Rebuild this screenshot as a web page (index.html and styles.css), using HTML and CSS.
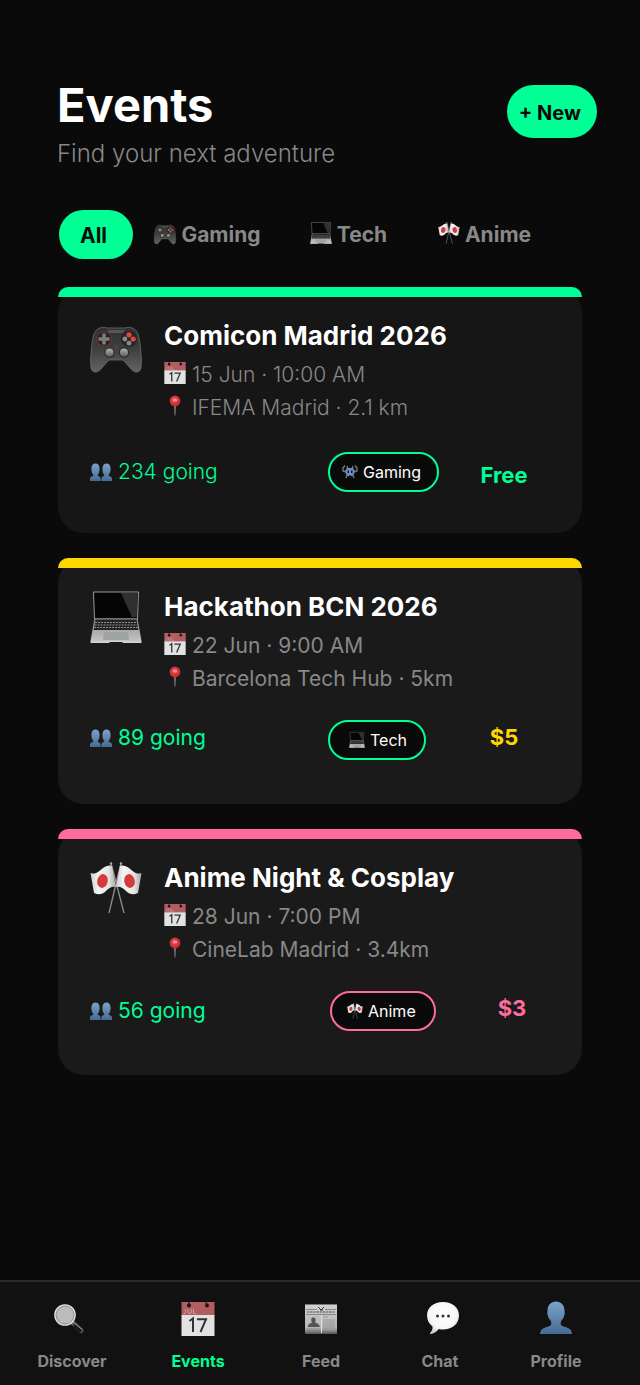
FILE: index.html
```html
<!DOCTYPE html>
<html lang="en">
<head>
<meta charset="utf-8">
<meta name="viewport" content="width=device-width, initial-scale=1">
<title>Events</title>
<link rel="stylesheet" href="styles.css">
</head>
<body>
<svg class="sprite" width="0" height="0" aria-hidden="true">
  <defs>
    <linearGradient id="pad" x1="0" y1="0" x2="0" y2="1"><stop offset="0" stop-color="#303131"/><stop offset=".45" stop-color="#3c3d3d"/><stop offset="1" stop-color="#626363"/></linearGradient>
    <linearGradient id="stick" x1="0" y1="0" x2="0" y2="1"><stop offset="0" stop-color="#b0b0b0"/><stop offset="1" stop-color="#606060"/></linearGradient>
    <linearGradient id="blue" x1="0" y1="0" x2="0" y2="1"><stop offset="0" stop-color="#7ba3c9"/><stop offset="1" stop-color="#456a93"/></linearGradient>
    <linearGradient id="cloth" x1="0" y1="0" x2="1" y2="0"><stop offset="0" stop-color="#cfcfcf"/><stop offset=".3" stop-color="#f4f4f4"/><stop offset=".7" stop-color="#e6e6e6"/><stop offset="1" stop-color="#a9a9a9"/></linearGradient>
    <linearGradient id="metal" x1="0" y1="0" x2="0" y2="1"><stop offset="0" stop-color="#8e8e8e"/><stop offset="1" stop-color="#c4c4c4"/></linearGradient>
    <linearGradient id="paper" x1="0" y1="0" x2="0" y2="1"><stop offset="0" stop-color="#d2d2d2"/><stop offset=".8" stop-color="#b4b4b4"/><stop offset="1" stop-color="#555"/></linearGradient>
    <radialGradient id="bubble" cx=".5" cy=".4" r=".6"><stop offset="0" stop-color="#fff"/><stop offset=".7" stop-color="#f7f7f7"/><stop offset="1" stop-color="#cfd1d1"/></radialGradient>
    <radialGradient id="ball" cx=".45" cy=".4" r=".6"><stop offset="0" stop-color="#ff6b78"/><stop offset=".4" stop-color="#dc3b40"/><stop offset="1" stop-color="#bd2b2e"/></radialGradient>
  </defs>
  <symbol id="i-gamepad" viewBox="0 -1 52 52">
    <path d="M8 8C11 6 14 6 17 7H35C38 6 41 6 44 8C48 10 49 16 50 23C51 31 52 40 51 47C50 52 45 52 42 49L34 40C33 39 32 39 31 39H21C20 39 19 39 18 40L10 49C7 52 2 52 1 47C0 40 1 31 2 23C3 16 4 10 8 8Z" fill="url(#pad)" stroke="#6c6c6c" stroke-width=".8"/>
    <path d="M17 9H35L33 12H19Z" fill="#565656"/>
    <circle cx="14" cy="18" r="7.2" fill="#232424" stroke="#7b3034" stroke-width=".9"/>
    <path d="M12.3 12.5h3.4v3.8h3.8v3.4h-3.8v3.8h-3.4v-3.8H8.500v-3.400h3.800z" fill="#7d7d7d"/>
    <circle cx="39" cy="18" r="8" fill="#242525"/>
    <circle cx="39" cy="13.800" r="2.600" fill="#e5453f"/><circle cx="43.200" cy="18" r="2.600" fill="#e5453f"/>
    <circle cx="34.900" cy="18" r="2.400" fill="#8b8b8b"/><circle cx="39" cy="22.200" r="2.400" fill="#8b8b8b"/>
    <circle cx="26.500" cy="26" r="1.500" fill="#8b3035"/>
    <circle cx="19.500" cy="31.500" r="5.200" fill="#2a2b2b"/><circle cx="34" cy="31.500" r="5.200" fill="#2a2b2b"/>
    <circle cx="19.500" cy="31.500" r="4" fill="url(#stick)"/><circle cx="34" cy="31.500" r="4" fill="url(#stick)"/>
  </symbol>
  <symbol id="i-laptop" viewBox="0 0 52 52">
    <path d="M3.500 1H48.500L47.500 28H4.500Z" fill="#050505" stroke="#9a9a9a" stroke-width="1"/>
    <path d="M31 2H47.600L46.800 26H42Z" fill="#303030"/>
    <path d="M4.500 27.500H47.500L51.500 50H.5Z" fill="url(#metal)"/>
    <path d="M5.500 28.500H46.500L48.500 39H3.500Z" fill="#242424"/>
    <path d="M5 31.500H47M4.500 34H47.500M4 36.500H48" stroke="#aaa" stroke-width=".8" stroke-dasharray="2 1"/>
    <path d="M14 41H38L39 49H13Z" fill="#9ea3a3"/>
    <path d="M.5 50H51.500V52H33L32 51H20L19 52H.5Z" fill="#d0d0d0"/>
  </symbol>
  <symbol id="i-flags" viewBox="0 0 52 52">
    <path d="M21 1L34 51M31 1L19 51" stroke="#8e8e8e" stroke-width="1.300"/>
    <path d="M.5 11C6 13 9 9 13 6C16 4 19 3 22 4L26 25C22 24 19 26 16 29C12 33 8 33 4 31Z" fill="url(#cloth)"/>
    <path d="M51.500 11C46 13 43 9 39 6C36 4 33 3 30 4L26 25C30 24 33 26 36 29C40 33 44 33 48 31Z" fill="url(#cloth)"/>
    <ellipse cx="12.500" cy="19" rx="5.300" ry="7" transform="rotate(12 12.500 19)" fill="#d53b3c"/>
    <ellipse cx="39.500" cy="19" rx="5.300" ry="7" transform="rotate(-12 39.500 19)" fill="#d53b3c"/>
    <circle cx="21" cy="1.500" r="1.200" fill="#aaa"/><circle cx="31" cy="1.500" r="1.200" fill="#aaa"/>
  </symbol>
  <symbol id="i-calendar" viewBox="0 0 33 34">
    <path d="M0 0H33V14H0Z" fill="#b25d61"/><path d="M0 13H33V34H0Z" fill="#e2e2e2"/>
    <circle cx="7.500" cy="3.500" r="2" fill="#171717"/><circle cx="25.500" cy="3.500" r="2" fill="#171717"/>
    <path d="M7 0L8 3M24 0L26 3" stroke="#171717" stroke-width="1.200"/>
    <path d="M4 7V10.500Q4 12 2 11.500M6.500 7V10Q6.500 11.700 8.200 11.700T9.800 10V7M12 7V11.600H14.500" fill="none" stroke="#d3a3a5" stroke-width=".9"/>
    <path d="M8 19L11.500 16.500V30M15.500 17.300H24.500L19 30" fill="none" stroke="#303234" stroke-width="2"/>
  </symbol>
  <symbol id="i-pin" viewBox="0 0 22 22">
    <path d="M10.200 10H11.800L11.400 20.500H10.600Z" fill="#8f8f8f"/>
    <circle cx="11" cy="6" r="5.400" fill="url(#ball)"/><ellipse cx="11" cy="5" rx="2.400" ry="1.500" fill="#f58c9a"/>
  </symbol>
  <symbol id="i-people" viewBox="0 0 22 18">
    <g fill="url(#blue)">
      <path d="M0 18V15.500C0 13.300 3.500 13.500 3.500 12C1.800 10.500 1.400 8 1.400 5.500C1.400 2.400 3.200.5 5.500.5S9.600 2.400 9.600 5.500C9.600 8 9.200 10.500 7.600 12C7.600 13.500 10.600 13.300 10.600 15.500V18Z"/>
      <path d="M11.400 18V15.500C11.400 13.300 14.400 13.500 14.400 12C12.800 10.500 12.400 8 12.400 5.500C12.400 2.400 14.200.5 16.500.5S20.600 2.400 20.600 5.500C20.600 8 20.200 10.500 18.500 12C18.500 13.500 22 13.300 22 15.500V18Z"/>
    </g>
  </symbol>
  <symbol id="i-invader" viewBox="0 0 16 16">
    <path d="M3 1.500L1 4V7L4 8M13 1.500L15 4V7L12 8M5 11L4 14M11 11L12 14M5 2L6 5M11 2L10 5" fill="none" stroke="#77767c" stroke-width="1.400"/>
    <path d="M5 4H11L13 7L12 10L10 12.500L8 11L6 12.500L4 10L3 7Z" fill="#6b91bf"/>
    <path d="M5.500 6.500H7V9H5.500ZM9 6.500H10.500V9H9Z" fill="#111"/>
  </symbol>
  <symbol id="i-search" viewBox="3 0 34 34">
    <path d="M20 20L29 28.500" stroke="#525858" stroke-width="5" stroke-linecap="round"/>
    <path d="M23 24L28 28.500" stroke="#161818" stroke-width="3.200" stroke-linecap="round"/>
    <path d="M21 20L30 27.500" stroke="#a2a6a6" stroke-width=".8"/>
    <circle cx="13" cy="13" r="10" fill="#bcbcbc" stroke="#e2e2e2" stroke-width="1.600"/>
    <circle cx="13" cy="13" r="9" fill="none" stroke="#777" stroke-width=".7"/>
  </symbol>
  <symbol id="i-news" viewBox="0 0 34 34">
    <path d="M1 2H33V32H1Z" fill="url(#paper)"/>
    <path d="M1 2.500H33" stroke="#777"/><path d="M2 7.500H13M21 7.500H32M2 12.500H32" stroke="#777" stroke-width=".8"/>
    <path d="M14 5L17 8L20 5M16 8H19" stroke="#333" fill="none"/>
    <path d="M3 10H31" stroke="#777" stroke-width="1.600" stroke-dasharray="2 .7 3 .7"/>
    <path d="M3 14H16V25H3Z" fill="#bdbdbd"/><path d="M4 25C4 21 7 22 8 20C6 17 8 15 10 15.500C12 16 12 19 11 20C13 22 15 21 16 25Z" fill="#555"/>
    <path d="M17.500 13V31" stroke="#ddd"/><path d="M19 15H24M19 18H31M19 20H31M19 22H31M19 24H31M19 26H31M3 27H16M3 29H16" stroke="#858585" stroke-width=".6"/>
  </symbol>
  <symbol id="i-chat" viewBox="-3 1 34 34">
    <path d="M17 1C26.500 1 33 6.500 33 14.500C33 23 26 28.500 17 28.500C15.500 28.500 14 28.400 12.800 28C10.500 30.800 7.500 33 4.500 33C4 33 3.800 32.500 4.200 32C5.800 30 6.800 28 6.500 25.500C3 23 1 19 1 14.500C1 6.500 7.500 1 17 1Z" fill="url(#bubble)"/>
    <circle cx="11.500" cy="15" r="1.500" fill="#333"/><circle cx="17" cy="15" r="1.500" fill="#333"/><circle cx="22.500" cy="15" r="1.500" fill="#333"/>
  </symbol>
  <symbol id="i-person" viewBox="0 1 34 34">
    <path d="M17 .5C22 .5 25.500 4 25.500 9.500C25.500 11 26 11.500 25.500 13.500C25 16 24 18 22.500 19.500C21.500 21 21.500 23 22 24C24 26.500 33 25.500 33 33H1C1 25.500 10 26.500 12 24C12.500 23 12.500 21 11.500 19.500C10 18 9 16 8.500 13.500C8 11.500 8.500 11 8.500 9.500C8.500 4 12 .5 17 .5Z" fill="url(#blue)"/>
  </symbol>
</svg>

<div class="app">
  <header class="header">
    <div>
      <h1 class="header__title">Events</h1>
      <p class="header__subtitle">Find your next adventure</p>
    </div>
    <button class="new-button" type="button">+ New</button>
  </header>

  <div class="tabs">
    <button class="tab tab--active" type="button">All</button>
    <button class="tab" type="button"><svg class="icon" aria-hidden="true"><use href="#i-gamepad"/></svg>Gaming</button>
    <button class="tab" type="button"><svg class="icon" aria-hidden="true"><use href="#i-laptop"/></svg>Tech</button>
    <button class="tab" type="button"><svg class="icon" aria-hidden="true"><use href="#i-flags"/></svg>Anime</button>
  </div>

  <main class="events">
    <article class="event event--gaming">
      <div class="event__bar"></div>
      <div class="event__main">
        <svg class="event__icon" aria-hidden="true"><use href="#i-gamepad"/></svg>
        <div>
          <h2 class="event__title">Comicon Madrid 2026</h2>
          <p class="event__meta"><svg class="icon" aria-hidden="true"><use href="#i-calendar"/></svg>15 Jun · 10:00 AM</p>
          <p class="event__meta"><svg class="icon" aria-hidden="true"><use href="#i-pin"/></svg>IFEMA Madrid · 2.1 km</p>
        </div>
      </div>
      <div class="event__foot">
        <span class="event__going"><svg class="icon" aria-hidden="true"><use href="#i-people"/></svg>234 going</span>
        <span class="chip"><svg class="chip__icon" aria-hidden="true"><use href="#i-invader"/></svg>Gaming</span>
        <strong class="event__price">Free</strong>
      </div>
    </article>

    <article class="event event--tech">
      <div class="event__bar"></div>
      <div class="event__main">
        <svg class="event__icon" aria-hidden="true"><use href="#i-laptop"/></svg>
        <div>
          <h2 class="event__title">Hackathon BCN 2026</h2>
          <p class="event__meta"><svg class="icon" aria-hidden="true"><use href="#i-calendar"/></svg>22 Jun · 9:00 AM</p>
          <p class="event__meta"><svg class="icon" aria-hidden="true"><use href="#i-pin"/></svg>Barcelona Tech Hub · 5km</p>
        </div>
      </div>
      <div class="event__foot">
        <span class="event__going"><svg class="icon" aria-hidden="true"><use href="#i-people"/></svg>89 going</span>
        <span class="chip"><svg class="chip__icon" aria-hidden="true"><use href="#i-laptop"/></svg>Tech</span>
        <strong class="event__price">$5</strong>
      </div>
    </article>

    <article class="event event--anime">
      <div class="event__bar"></div>
      <div class="event__main">
        <svg class="event__icon" aria-hidden="true"><use href="#i-flags"/></svg>
        <div>
          <h2 class="event__title">Anime Night &amp; Cosplay</h2>
          <p class="event__meta"><svg class="icon" aria-hidden="true"><use href="#i-calendar"/></svg>28 Jun · 7:00 PM</p>
          <p class="event__meta"><svg class="icon" aria-hidden="true"><use href="#i-pin"/></svg>CineLab Madrid · 3.4km</p>
        </div>
      </div>
      <div class="event__foot">
        <span class="event__going"><svg class="icon" aria-hidden="true"><use href="#i-people"/></svg>56 going</span>
        <span class="chip"><svg class="chip__icon" aria-hidden="true"><use href="#i-flags"/></svg>Anime</span>
        <strong class="event__price">$3</strong>
      </div>
    </article>
  </main>

  <nav class="nav">
    <a class="nav__item" href="#discover"><svg class="nav__icon" aria-hidden="true"><use href="#i-search"/></svg>Discover</a>
    <a class="nav__item nav__item--active" href="#events"><svg class="nav__icon" aria-hidden="true"><use href="#i-calendar"/></svg>Events</a>
    <a class="nav__item" href="#feed"><svg class="nav__icon" aria-hidden="true"><use href="#i-news"/></svg>Feed</a>
    <a class="nav__item" href="#chat"><svg class="nav__icon" aria-hidden="true"><use href="#i-chat"/></svg>Chat</a>
    <a class="nav__item" href="#profile"><svg class="nav__icon" aria-hidden="true"><use href="#i-person"/></svg>Profile</a>
  </nav>
</div>
</body>
</html>
```

FILE: styles.css
```css
:root {
  --green: #00ff94;
  --yellow: #ffd600;
  --pink: #ff6b9d;
  --bg: #0a0a0a;
  --muted: #888;
}

* {
  box-sizing: border-box;
}

body {
  margin: 0;
  background: var(--bg);
  color: #fff;
  font-family: Inter, "Liberation Sans", sans-serif;
}

h1, h2, p {
  margin: 0;
}

button {
  border: 0;
  padding: 0;
  font-family: inherit;
  cursor: pointer;
}

svg,
symbol {
  overflow: visible;
}

.sprite {
  position: absolute;
}

.app {
  display: flex;
  flex-direction: column;
  min-height: 100vh;
}

.header {
  display: flex;
  justify-content: space-between;
  align-items: flex-start;
  padding: 77px 43px 0 57px;
}

.header__title {
  font-size: 47px;
  line-height: 56px;
  font-weight: 700;
}

.header__subtitle {
  margin-top: 7px;
  color: var(--muted);
  font-size: 24px;
  line-height: 28px;
  font-weight: 300;
}

.new-button {
  margin-top: 8px;
  padding: 2px 16px 0 12px;
  min-width: 90px;
  height: 53px;
  border-radius: 27px;
  background: var(--green);
  color: var(--bg);
  font-size: 20px;
  font-weight: 700;
}

.tabs {
  display: grid;
  grid-template-columns: 74fr 149fr 133fr 139fr;
  padding: 42px 86px 0 59px;
}

.tab {
  display: flex;
  align-items: center;
  justify-content: center;
  gap: 5px;
  height: 49px;
  border-radius: 25px;
  background: transparent;
  color: var(--muted);
  font-size: 21px;
  font-weight: 700;
}

.tab--active {
  padding: 2px 5px 0 0;
  background: var(--green);
  color: var(--bg);
}

.icon {
  flex: none;
  width: 22px;
  height: 22px;
  margin-bottom: 4px;
}

.events {
  display: flex;
  flex-direction: column;
  gap: 25px;
  padding: 28px 58px 32px;
}

.event {
  --accent: var(--green);
  --chip: var(--green);
  min-height: 246px;
  border-radius: 26px;
  background: #1a1a1a;
}

.event--gaming {
  background: #161616;
}

.event--tech {
  --accent: var(--yellow);
}

.event--anime {
  --accent: var(--pink);
  --chip: var(--pink);
}

.event__bar {
  height: 10px;
  border-radius: 10px 10px 0 0;
  background: var(--accent);
}

.event__main {
  display: flex;
  gap: 22px;
  padding: 23px 32px 0;
}

.event__icon {
  flex: none;
  width: 52px;
  height: 52px;
}

.event__title {
  margin-bottom: 6px;
  font-size: 26px;
  line-height: 32px;
  font-weight: 700;
}

.event__meta {
  display: flex;
  align-items: center;
  gap: 6px;
  color: var(--muted);
  font-size: 21px;
  line-height: 33px;
}

.event--gaming .event__meta,
.event--gaming .event__going {
  font-weight: 300;
}

.event__foot {
  display: grid;
  grid-template-columns: 238px 1fr 90px;
  align-items: center;
  padding: 25px 33px 0 32px;
}

.event--gaming .event__foot {
  padding-top: 28px;
}

.event--anime .event__foot {
  grid-template-columns: 240px 1fr 74px;
}

.event__going {
  display: flex;
  align-items: center;
  gap: 6px;
  color: var(--green);
  font-size: 21px;
  line-height: 28px;
}

.event__going .icon {
  margin-bottom: 0;
}

.event--tech .event__going {
  padding-bottom: 4px;
}

.chip {
  justify-self: start;
  display: flex;
  align-items: center;
  gap: 5px;
  height: 40px;
  padding: 0 17px 0 19px;
  border: 2px solid var(--chip);
  border-radius: 20px;
  background: var(--bg);
  font-size: 16px;
}

.chip__icon {
  width: 16px;
  height: 16px;
}

.event--gaming .chip {
  padding: 0 16px 0 12px;
}

.event--anime .chip {
  padding: 0 18px 0 15px;
}

.event__price {
  padding-bottom: 6px;
  color: var(--accent);
  font-size: 22px;
  line-height: 28px;
  font-weight: 700;
  text-align: center;
}

.event--gaming .event__price {
  padding: 5px 0 0;
}

.nav {
  display: grid;
  grid-template-columns: 124fr 128fr 118fr 120fr 112fr;
  margin-top: auto;
  padding: 20px 28px 14px 10px;
  border-top: 2px solid #2a2a2a;
  background: #111;
}

.nav__item {
  display: flex;
  flex-direction: column;
  align-items: center;
  gap: 15px;
  color: var(--muted);
  font-size: 16px;
  line-height: 20px;
  font-weight: 700;
  text-decoration: none;
}

.nav__item--active {
  color: var(--green);
}

.nav__icon {
  width: 34px;
  height: 34px;
}
```
